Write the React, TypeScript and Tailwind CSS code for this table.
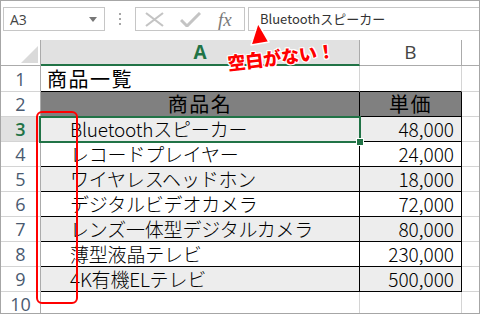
import React from 'react';

const items: [string, string][] = [
  ['Bluetoothスピーカー', '48,000'],
  ['レコードプレイヤー', '24,000'],
  ['ワイヤレスヘッドホン', '18,000'],
  ['デジタルビデオカメラ', '72,000'],
  ['レンズ一体型デジタルカメラ', '80,000'],
  ['薄型液晶テレビ', '230,000'],
  ['4K有機ELテレビ', '500,000'],
];

const jp = "font-['Noto_Sans_CJK_JP',sans-serif] font-light";

const RowHead: React.FC<{ n: number; active?: boolean }> = ({ n, active }) => (
  <div
    className={`w-[40px] shrink-0 flex items-center justify-center border-r border-b border-r-[#ababab] border-b-[#d4d4d4] text-[18px] font-['Open_Sans',sans-serif] leading-none ${
      active ? 'bg-[#e1e1e1] text-[#217346] font-semibold' : 'bg-white text-[#4a5a70] font-normal'
    }`}
  >
    {n}
  </div>
);

export default function App() {
  return (
    <div className="relative w-[480px] h-[314px] overflow-hidden bg-white border border-[#a6a6a6] box-border">
      {/* formula bar */}
      <div className="h-[39px] flex items-start pt-[6px] pl-[2px]">
        <div className="w-[102px] h-[24px] flex items-center justify-between pl-[6px] pr-[7px] border border-[#c6c6c6] text-[14px] text-[#444] font-['Open_Sans',sans-serif]">
          <span>A3</span>
          <svg width="8" height="5" viewBox="0 0 8 5">
            <polygon points="0,0 8,0 4,5" fill="#777" />
          </svg>
        </div>
        <div className="w-[30px] h-[24px] flex flex-col items-center justify-center gap-[3px]">
          <span className="w-[2px] h-[2px] bg-[#a6a6a6]" />
          <span className="w-[2px] h-[2px] bg-[#a6a6a6]" />
          <span className="w-[2px] h-[2px] bg-[#a6a6a6]" />
        </div>
        <div className="w-[110px] h-[24px] flex items-center border border-[#c6c6c6] pl-[9px]">
          <svg width="19" height="15" viewBox="0 0 19 15">
            <path d="M1 1 L18 14 M18 1 L1 14" stroke="#c4c4c4" strokeWidth="2.2" fill="none" />
          </svg>
          <svg width="21" height="15" viewBox="0 0 21 15" className="ml-[16px]">
            <path d="M1 8 L7 14 L20 1" stroke="#c4c4c4" strokeWidth="3" fill="none" />
          </svg>
          <span className="ml-[17px] text-[19px] italic text-[#7a7a7a] font-['Liberation_Serif',serif] leading-none">
            fx
          </span>
        </div>
        <div className="flex-1 h-[24px] ml-[3px] flex items-center border border-r-0 border-[#c6c6c6] pl-[11px] text-[13px] text-[#333] font-['Noto_Sans_CJK_JP',sans-serif]">
          Bluetoothスピーカー
        </div>
      </div>

      {/* column headers */}
      <div className="flex h-[26px]">
        <div className="w-[40px] shrink-0 bg-white border-r border-b border-[#ababab] flex items-end justify-end pr-[2px] pb-[2px]">
          <svg width="17" height="17" viewBox="0 0 17 17">
            <polygon points="17,0 17,17 0,17" fill="#dadada" />
          </svg>
        </div>
        <div className="w-[319px] shrink-0 bg-[#e1e1e1] border-r border-r-[#ababab] border-b-2 border-b-[#217346] flex items-center justify-center text-[19px] font-bold text-[#217346] font-['Open_Sans',sans-serif]">
          A
        </div>
        <div className="w-[102px] shrink-0 bg-white border-r border-b border-[#ababab] flex items-center justify-center text-[19px] text-[#444] font-['Open_Sans',sans-serif]">
          B
        </div>
        <div className="flex-1 bg-white border-b border-[#ababab]" />
      </div>

      {/* row 1 */}
      <div className="flex h-[26px] font-['Noto_Sans_CJK_JP',sans-serif]">
        <RowHead n={1} />
        <div className="w-[319px] shrink-0 flex items-center pl-[6px] border-r border-r-[#d4d4d4] border-b border-b-black text-[20px] tracking-[1.5px] text-black">
          商品一覧
        </div>
        <div className="w-[102px] shrink-0 border-r border-r-[#d4d4d4] border-b border-b-black" />
        <div className="flex-1 border-b border-[#d4d4d4]" />
      </div>

      {/* row 2 */}
      <div className="flex h-[25px] font-['Noto_Sans_CJK_JP',sans-serif]">
        <RowHead n={2} />
        <div className="w-[319px] shrink-0 flex items-center justify-center bg-[#808080] border-r border-b border-black text-[20px] tracking-[1.5px] text-black">
          商品名
        </div>
        <div className="w-[102px] shrink-0 flex items-center justify-center bg-[#808080] border-r border-b border-black text-[20px] tracking-[1.5px] text-black">
          単価
        </div>
        <div className="flex-1 border-b border-[#d4d4d4]" />
      </div>

      {/* rows 3-9 */}
      {items.map(([name, price], i) => {
        const shade = i % 2 === 0 ? 'bg-[#ededed]' : 'bg-white';
        return (
          <div key={name} className={`flex h-[25px] ${jp}`}>
            <RowHead n={i + 3} active={i === 0} />
            <div className={`relative w-[319px] shrink-0 flex items-center pl-[29px] border-r border-b border-black text-[19px] tracking-[-0.2px] text-black ${shade}`}>
              {name}
              {i === 0 && (
                <>
                  <div className="absolute -left-[2px] -top-[1px] w-[322px] h-[27px] border-2 border-[#217346] z-10" />
                  <div className="absolute left-[315px] top-[21px] w-[8px] h-[8px] bg-[#217346] border border-white z-10" />
                </>
              )}
            </div>
            <div className={`w-[102px] shrink-0 flex items-center justify-end pr-[7px] border-r border-b border-black text-[19px] text-black ${shade}`}>
              {price}
            </div>
            <div className="flex-1 border-b border-[#d4d4d4]" />
          </div>
        );
      })}

      {/* row 10 */}
      <div className="flex h-[25px]">
        <RowHead n={10} />
        <div className="w-[319px] shrink-0 border-r border-b border-[#d4d4d4]" />
        <div className="w-[102px] shrink-0 border-r border-b border-[#d4d4d4]" />
        <div className="flex-1 border-b border-[#d4d4d4]" />
      </div>

      {/* red frame around the indent */}
      <div className="absolute left-[35px] top-[110px] w-[42px] h-[193px] border-2 border-[#ff0000] rounded-[6px] z-20" />

      {/* callout */}
      <svg className="absolute left-[248px] top-[20px] z-20" width="24" height="28" viewBox="0 0 24 28">
        <polygon points="9,2 2,24 20,21" fill="#ff0000" stroke="#fff" strokeWidth="1.5" strokeLinejoin="round" />
      </svg>
      <div className="absolute left-[224px] top-[42px] w-[112px] h-[26px] flex items-center justify-center rotate-[-7deg] z-20 text-[18px] font-black text-[#ff0000] leading-none font-['Noto_Sans_CJK_JP',sans-serif] [text-shadow:-1px_-1px_0_#fff,1px_-1px_0_#fff,-1px_1px_0_#fff,1px_1px_0_#fff,0_1px_0_#fff,0_-1px_0_#fff,1px_0_0_#fff,-1px_0_0_#fff]">
        空白がない！
      </div>
    </div>
  );
}
